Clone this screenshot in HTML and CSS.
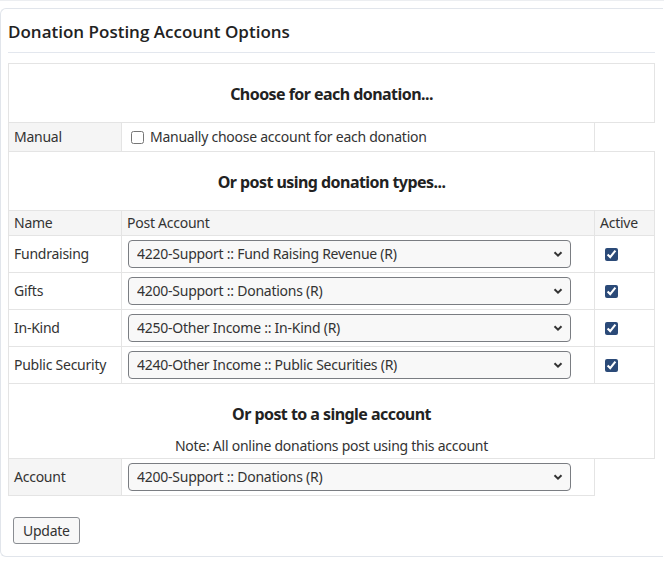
FILE: index.html
```html
<!DOCTYPE html>
<html lang="en">
<head>
  <meta charset="UTF-8" />
  <title>Donation Posting Account Options</title>
  <link rel="stylesheet" href="styles.css">
</head>
<body>
  <div class="page">
    <div class="card">
      <h3 class="card-title">Donation Posting Account Options</h3>
      <form>
        <table class="opts">
          <tr>
            <td colspan="3" class="section">Choose for each donation...</td>
          </tr>
          <tr>
            <td class="label">Manual</td>
            <td><label class="check"><input type="checkbox"> Manually choose account for each donation</label></td>
          </tr>
          <tr>
            <td colspan="3" class="section">Or post using donation types...</td>
          </tr>
          <tr class="head">
            <td>Name</td>
            <td>Post Account</td>
            <td>Active</td>
          </tr>
          <tr>
            <td>Fundraising</td>
            <td><span class="sel"><select><option>4220-Support :: Fund Raising Revenue (R)</option></select><svg viewBox="0 0 10 6"><path d="M1.5 1.2 5 4.6 8.5 1.2" /></svg></span></td>
            <td class="act"><input type="checkbox" checked></td>
          </tr>
          <tr>
            <td>Gifts</td>
            <td><span class="sel"><select><option>4200-Support :: Donations (R)</option></select><svg viewBox="0 0 10 6"><path d="M1.5 1.2 5 4.6 8.5 1.2" /></svg></span></td>
            <td class="act"><input type="checkbox" checked></td>
          </tr>
          <tr>
            <td>In-Kind</td>
            <td><span class="sel"><select><option>4250-Other Income :: In-Kind (R)</option></select><svg viewBox="0 0 10 6"><path d="M1.5 1.2 5 4.6 8.5 1.2" /></svg></span></td>
            <td class="act"><input type="checkbox" checked></td>
          </tr>
          <tr>
            <td>Public Security</td>
            <td><span class="sel"><select><option>4240-Other Income :: Public Securities (R)</option></select><svg viewBox="0 0 10 6"><path d="M1.5 1.2 5 4.6 8.5 1.2" /></svg></span></td>
            <td class="act"><input type="checkbox" checked></td>
          </tr>
          <tr>
            <td colspan="3" class="section single">
              Or post to a single account
              <div class="note">Note: All online donations post using this account</div>
            </td>
          </tr>
          <tr>
            <td class="label">Account</td>
            <td><span class="sel"><select><option>4200-Support :: Donations (R)</option></select><svg viewBox="0 0 10 6"><path d="M1.5 1.2 5 4.6 8.5 1.2" /></svg></span></td>
          </tr>
        </table>
        <button type="button" class="btn">Update</button>
      </form>
    </div>
  </div>
</body>
</html>
```

FILE: styles.css
```css
body { margin: 0; font-family: "Noto Sans", "Open Sans", sans-serif; font-size: 14px; letter-spacing: -0.25px; color: #333; background: #fff; }
.page { border-top: 1px solid #eceef1; padding-top: 7px; }
.card { width: 663px; border: 1px solid #e1e5eb; border-right: none; border-radius: 6px 0 0 6px; padding: 0 0 12px 7px; box-sizing: border-box; }
.card-title { margin: 0 8px 0 0; padding: 12px 0 9px; font-family: "Open Sans", "Noto Sans", sans-serif; font-size: 17px; font-weight: 600; letter-spacing: 0; color: #222; border-bottom: 1px solid #e3e7ee; line-height: 22px; }

.opts { margin-top: 10px; border-collapse: collapse; width: 647px; }
.opts td { border: 1px solid #e4e4e4; padding: 4px 6px; line-height: 20px; vertical-align: middle; }
.opts td:first-child { width: 101px; padding-left: 5px; }
.opts td:nth-child(2) { width: 460px; }
.section { text-align: center; font-weight: 700; font-size: 16px; letter-spacing: -0.55px; color: #222; padding: 18px 6px 16px !important; line-height: 24px !important; }
.section.single { padding: 18px 6px 0 !important; }
.note { font-weight: 400; font-size: 14px; letter-spacing: -0.25px; color: #333; margin-top: 8px; }
.label { background: #f5f5f5; }
.head td { background: #f5f5f5; padding: 2px 6px 2px 5px; }
.check { display: flex; align-items: center; gap: 6px; padding-left: 3px; }
.check input { margin: 0; width: 13px; height: 13px; }

.sel { position: relative; display: block; width: 443px; }
.sel select { display: block; width: 100%; height: 28px; appearance: none; border: 1px solid #7a7d82; border-radius: 4px; background: #f8f8f8; font: inherit; letter-spacing: -0.25px; color: #333; padding: 0 24px 0 8px; }
.sel svg { position: absolute; right: 8px; top: 11px; width: 10px; height: 6px; fill: none; stroke: #333; stroke-width: 2; pointer-events: none; }
.act { padding-left: 10px !important; }
.act input { margin: 0; width: 13px; height: 13px; accent-color: #2b4a78; display: block; }

.btn { margin: 21px 0 0 5px; height: 27px; padding: 0 9px; font: inherit; letter-spacing: -0.25px; color: #333; background: #f8f8f8; border: 1px solid #8a8d92; border-radius: 3px; }
```
